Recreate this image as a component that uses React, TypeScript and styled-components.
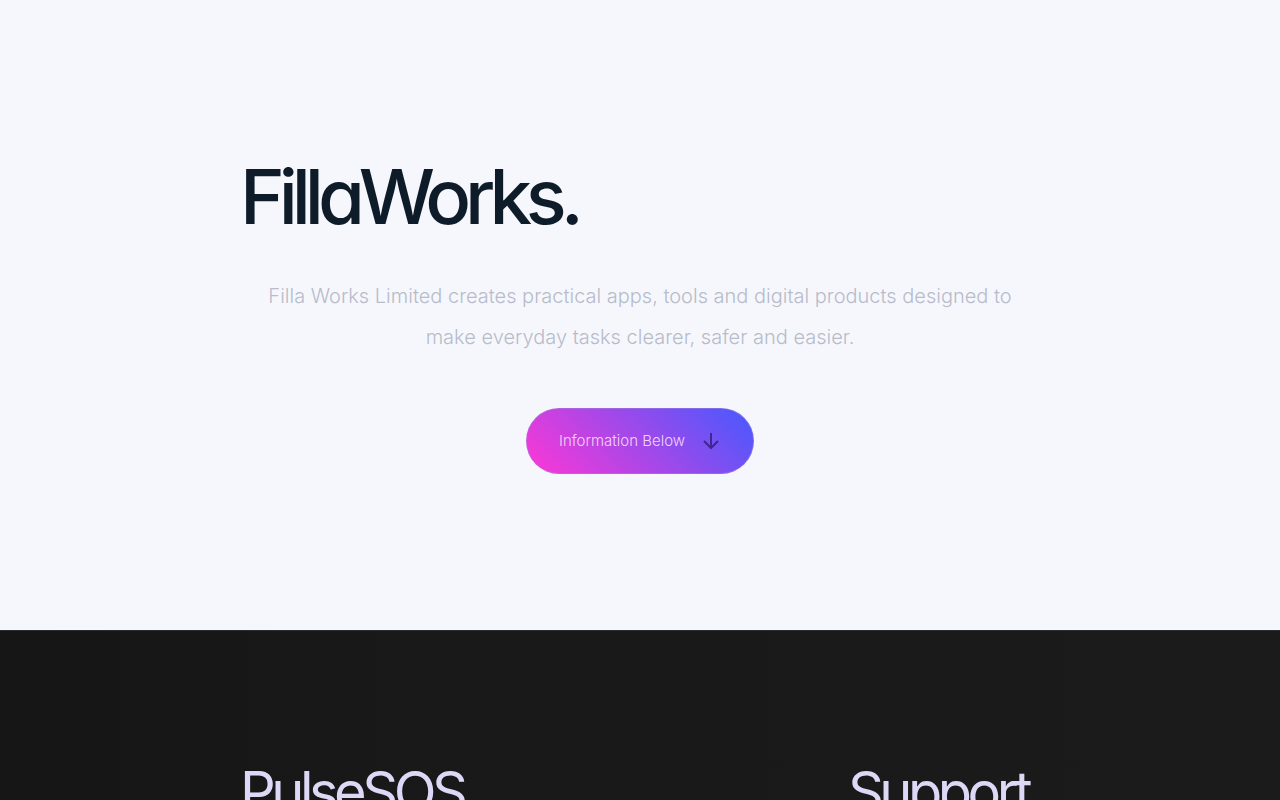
import React from "react";
import styled, { createGlobalStyle } from "styled-components";

const GlobalStyle = createGlobalStyle`
  *, *::before, *::after { box-sizing: border-box; }
  body {
    margin: 0;
    background: #f6f7fc;
    font-family: Inter, "Liberation Sans", sans-serif;
    font-weight: 300;
  }
  h1, h2, p { margin: 0; }
`;

const Hero = styled.header`
  padding: 148px 24px 156px;
  background: #f6f7fc;
`;

const Container = styled.div`
  max-width: 800px;
  margin: 0 auto;
`;

const Brand = styled.h1`
  color: #0e1c29;
  font-feature-settings: "cv11" 1;
  font-size: 76px;
  font-weight: 500;
  line-height: 96px;
  letter-spacing: -0.08em;
`;

const Lead = styled.p`
  max-width: 780px;
  margin: 32px auto 0;
  color: #b7bccb;
  font-size: 20px;
  line-height: 41px;
  text-align: center;
`;

const Actions = styled.div`
  display: flex;
  justify-content: center;
  margin-top: 50px;
`;

const PillLink = styled.a`
  display: inline-flex;
  align-items: center;
  gap: 16px;
  height: 66px;
  padding: 0 32px;
  border: 1px solid rgba(160, 130, 220, 0.5);
  border-radius: 33px;
  background: linear-gradient(45deg, #ff37d5, #5357fb 92%) border-box;
  color: #f3d3f8;
  font-size: 15px;
  line-height: 20px;
  text-decoration: none;
`;

const Products = styled.main`
  min-height: 400px;
  padding: 124px 24px;
  border-top: 1px solid #2a2b30;
  background: linear-gradient(90deg, #161616, #191919 40%, #1b1b1b);
`;

const Columns = styled.div`
  display: flex;
  justify-content: space-between;
  padding-right: 12px;
`;

const ColumnTitle = styled.h2`
  color: #dcd8f6;
  font-feature-settings: "cv11" 1;
  font-size: 56px;
  font-weight: 400;
  line-height: 74px;
  letter-spacing: -0.08em;
`;

function ArrowDown() {
  return (
    <svg width="20" height="20" viewBox="0 0 20 20" fill="none" stroke="#41268f" strokeWidth="2" aria-hidden="true">
      <path d="M10 2V17M3 10L10 17L17 10" />
    </svg>
  );
}

export default function App() {
  return (
    <>
      <GlobalStyle />
      <Hero>
        <Container>
          <Brand>FillaWorks.</Brand>
          <Lead>
            Filla Works Limited creates practical apps, tools and digital products designed to make
            everyday tasks clearer, safer and easier.
          </Lead>
          <Actions>
            <PillLink href="#products">
              Information Below
              <ArrowDown />
            </PillLink>
          </Actions>
        </Container>
      </Hero>
      <Products id="products">
        <Container>
          <Columns>
            <ColumnTitle>PulseSOS</ColumnTitle>
            <ColumnTitle>Support</ColumnTitle>
          </Columns>
        </Container>
      </Products>
    </>
  );
}
